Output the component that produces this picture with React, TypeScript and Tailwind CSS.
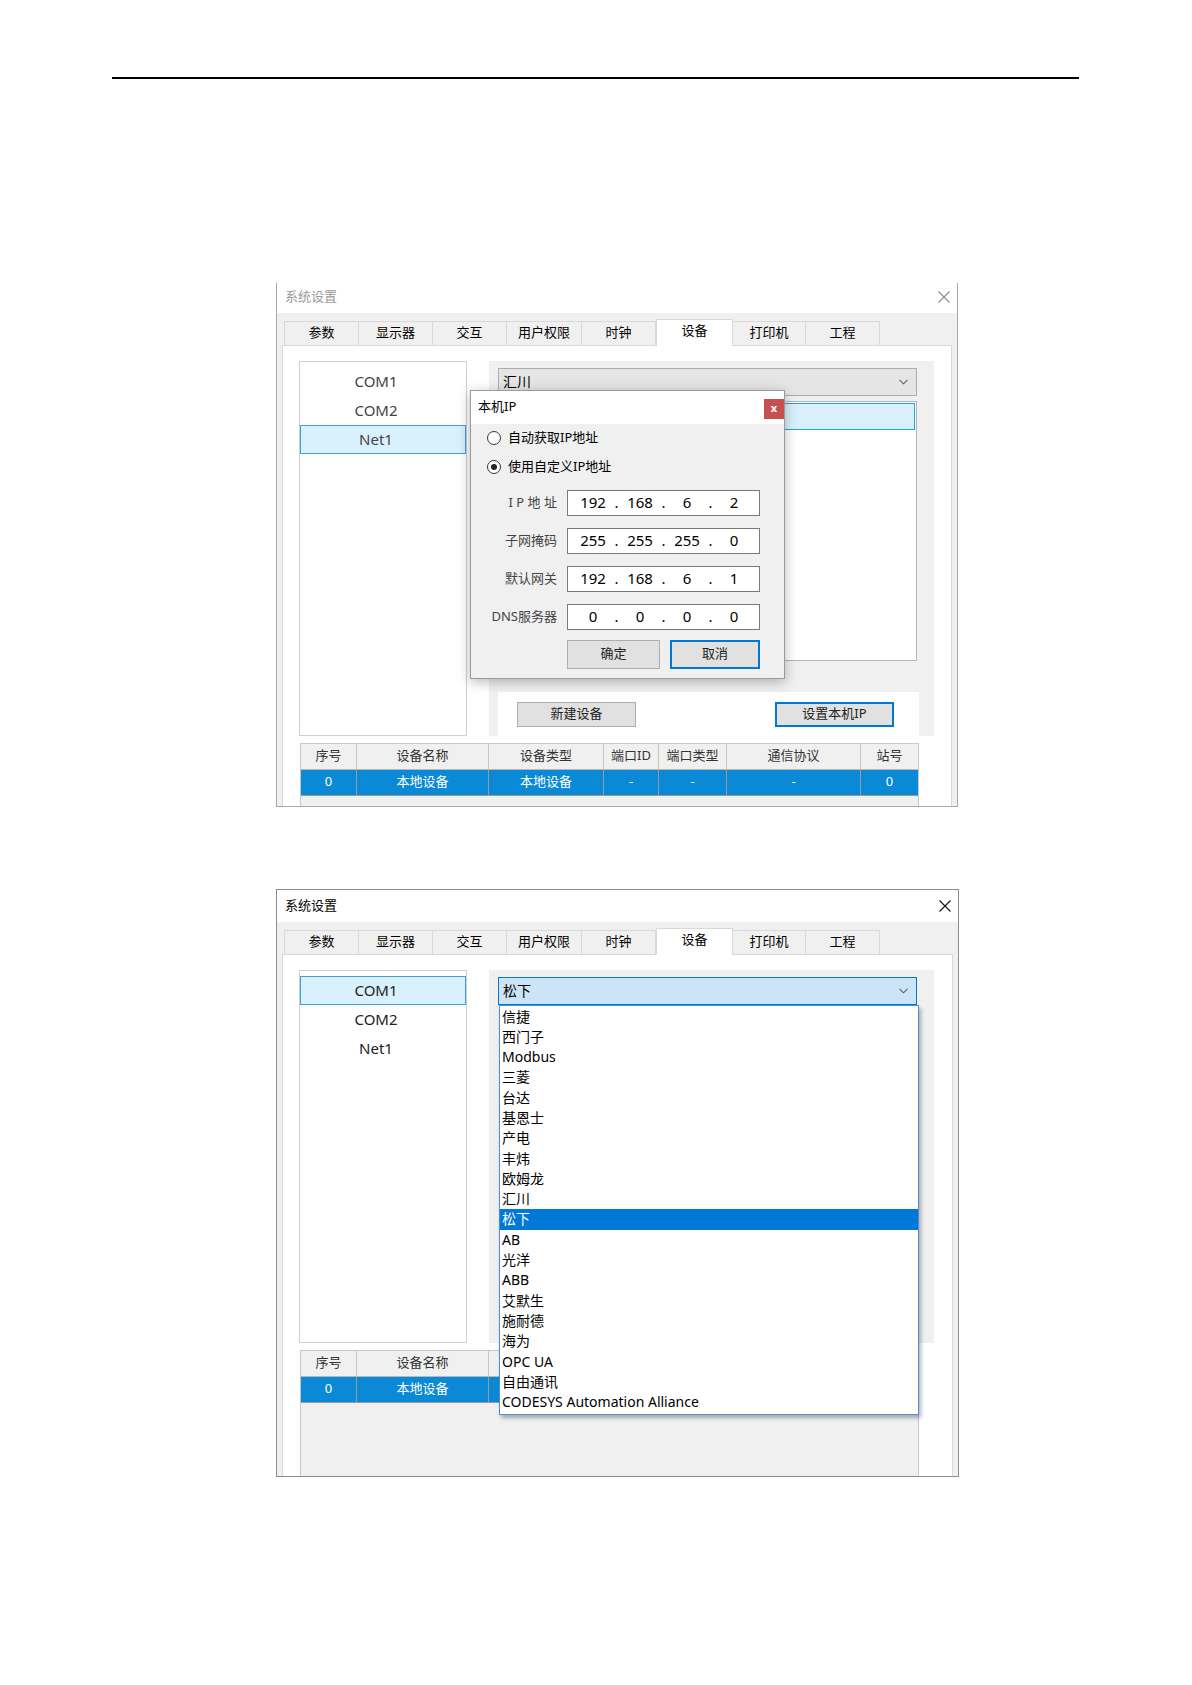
import React from 'react';

const TABS = [
  { label: '参数', w: 'w-[75px]' },
  { label: '显示器', w: 'w-[75px]' },
  { label: '交互', w: 'w-[75px]' },
  { label: '用户权限', w: 'w-[76px]' },
  { label: '时钟', w: 'w-[75px]' },
  { label: '设备', w: 'w-[77px]' },
  { label: '打印机', w: 'w-[74px]' },
  { label: '工程', w: 'w-[75px]' },
];

const PORTS = ['COM1', 'COM2', 'Net1'];

const COLUMNS = [
  { head: '序号', cell: '0', w: 'w-[56px]' },
  { head: '设备名称', cell: '本地设备', w: 'w-[132px]' },
  { head: '设备类型', cell: '本地设备', w: 'w-[115px]' },
  { head: '端口ID', cell: '-', w: 'w-[55px]' },
  { head: '端口类型', cell: '-', w: 'w-[68px]' },
  { head: '通信协议', cell: '-', w: 'w-[134px]' },
  { head: '站号', cell: '0', w: 'w-[57px]' },
];

const VENDORS = [
  '信捷', '西门子', 'Modbus', '三菱', '台达', '基恩士', '产电', '丰炜', '欧姆龙', '汇川',
  '松下', 'AB', '光洋', 'ABB', '艾默生', '施耐德', '海为', 'OPC UA', '自由通讯',
  'CODESYS Automation Alliance',
];

const IP_ROWS = [
  { label: 'I P 地 址', parts: ['192', '168', '6', '2'] },
  { label: '子网掩码', parts: ['255', '255', '255', '0'] },
  { label: '默认网关', parts: ['192', '168', '6', '1'] },
  { label: 'DNS服务器', parts: ['0', '0', '0', '0'] },
];

function CloseIcon({ color }: { color: string }) {
  return (
    <svg width="12" height="12" viewBox="0 0 12 12">
      <path d="M0.5 0.5 L11.5 11.5 M11.5 0.5 L0.5 11.5" stroke={color} strokeWidth="1.1" fill="none" />
    </svg>
  );
}

function Chevron() {
  return (
    <svg width="9" height="6" viewBox="0 0 9 6">
      <path d="M0.5 0.8 L4.5 4.8 L8.5 0.8" stroke="#606060" strokeWidth="1.1" fill="none" />
    </svg>
  );
}

function TabStrip() {
  return (
    <div className="flex items-end h-[26px] pl-[7px]">
      {TABS.map((t) =>
        t.label === '设备' ? (
          <div
            key={t.label}
            className={`${t.w} h-[27px] -mb-px relative z-10 bg-white border-t border-l border-r border-[#d9d9d9] flex items-center justify-center pb-[3px] text-[13px] text-black`}
          >
            {t.label}
          </div>
        ) : (
          <div
            key={t.label}
            className={`${t.w} h-[24px] -ml-px first:ml-0 bg-[#f0f0f0] border-t border-l border-r border-[#d9d9d9] flex items-center justify-center text-[13px] text-black`}
          >
            {t.label}
          </div>
        )
      )}
    </div>
  );
}

function PortList({ selected, height, textColor }: { selected: string; height: string; textColor: string }) {
  return (
    <div className={`w-[168px] ${height} bg-white border border-[#cfcfcf] pt-[5px]`}>
      {PORTS.map((p) => (
        <div
          key={p}
          className={`h-[29px] flex items-center justify-center pr-[14px] text-[15px] ${textColor} ${
            p === selected ? 'bg-[#d9f1fc] border border-[#3f9fe0]' : ''
          }`}
        >
          {p}
        </div>
      ))}
    </div>
  );
}

function Button({ label, focused }: { label: string; focused?: boolean }) {
  return (
    <div
      className={`w-[119px] h-[25px] flex items-center justify-center bg-[#e1e1e1] text-[13px] text-[#222] ${
        focused ? 'border-2 border-[#0078d7]' : 'border border-[#adadad]'
      }`}
    >
      {label}
    </div>
  );
}

function DevicePane({ height, value, open }: { height: string; value: string; open?: boolean }) {
  return (
    <div className={`ml-[22px] w-[445px] ${height} bg-[#f0f0f0] flex flex-col pl-[9px] pt-[7px]`}>
      <div
        className={`w-[419px] h-[28px] flex items-center justify-between pl-[4px] pr-[8px] text-[14px] text-black ${
          open ? 'bg-[#cce4f7] border border-[#0078d7]' : 'bg-[#e5e5e5] border border-[#adadad]'
        }`}
      >
        <span>{value}</span>
        <Chevron />
      </div>
      {/* the open vendor menu covers the list and the buttons below */}
      {!open && (
        <>
          <div className="mt-[5px] w-[419px] h-[260px] bg-white border border-[#b5b5b5] p-px">
            <div className="h-[27px] bg-[#d9f0fb] border border-[#26a0da]" />
          </div>
          <div className="flex-1" />
          <div className="w-[421px] h-[44px] bg-white flex items-start justify-between pt-[10px] pl-[19px] pr-[25px]">
            <Button label="新建设备" />
            <Button label="设置本机IP" focused />
          </div>
        </>
      )}
    </div>
  );
}

function DeviceTable({ shownCols = 7 }: { shownCols?: number }) {
  return (
    <div className="ml-px mt-[7px] w-[619px] flex-1 bg-[#f0f0f0] border-l border-r border-t border-[#c8c8c8] text-[13px]">
      <div className="flex h-[26px] border-b border-[#b8b8b8]">
        {COLUMNS.map((c, i) => (
          <div
            key={c.head}
            className={`${c.w} shrink-0 flex items-center justify-center text-[#333] border-r border-[#c8c8c8] last:border-r-0`}
          >
            {i < shownCols ? c.head : ''}
          </div>
        ))}
      </div>
      <div className="flex h-[26px] bg-[#0a8ad6] border-b border-[#9a9a9a]">
        {COLUMNS.map((c, i) => (
          <div
            key={c.head}
            className={`${c.w} shrink-0 flex items-center justify-center text-white border-r border-[#9a9a9a] last:border-r-0`}
          >
            {i < shownCols ? c.cell : ''}
          </div>
        ))}
      </div>
    </div>
  );
}

function Radio({ checked, label }: { checked?: boolean; label: string }) {
  return (
    <div className="flex items-center pl-[16px]">
      <div className="w-[14px] h-[14px] rounded-full border border-[#333] bg-white flex items-center justify-center">
        {checked && <div className="w-[6px] h-[6px] rounded-full bg-[#222]" />}
      </div>
      <span className="ml-[7px] text-[13px] text-black">{label}</span>
    </div>
  );
}

function IpDialog() {
  return (
    <div className="absolute left-[193px] top-[107px] w-[315px] h-[289px] border border-[#9a9a9a] bg-[#f0f0f0] shadow-[0_3px_12px_rgba(0,0,0,0.28)] flex flex-col">
      <div className="h-[33px] bg-white flex items-start justify-between pl-[7px]">
        <span className="mt-[6px] text-[13px] text-black">本机IP</span>
        <div className="mt-[8px] w-[20px] h-[20px] bg-[#c75050] flex items-center justify-center text-white text-[11px] font-bold leading-none pb-[2px]">
          x
        </div>
      </div>
      <div className="h-[28px] flex items-center">
        <Radio label="自动获取IP地址" />
      </div>
      <div className="h-[30px] flex items-center">
        <Radio checked label="使用自定义IP地址" />
      </div>
      <div className="mt-[8px] flex flex-col gap-[12px]">
        {IP_ROWS.map((r) => (
          <div key={r.label} className="flex items-center h-[26px]">
            <span className="w-[86px] text-right text-[13px] text-[#444] whitespace-pre">{r.label}</span>
            <div className="ml-[10px] w-[193px] h-[26px] bg-white border border-[#7a7a7a] flex items-center pl-[5px] text-[15px] text-black">
              {r.parts.map((p, i) => (
                <React.Fragment key={i}>
                  <span className="w-[40px] text-center">{p}</span>
                  {i < 3 && <span className="w-[7px] text-center">.</span>}
                </React.Fragment>
              ))}
            </div>
          </div>
        ))}
      </div>
      <div className="mt-[10px] ml-[96px] flex gap-[10px]">
        <div className="w-[93px] h-[29px] bg-[#e1e1e1] border border-[#adadad] flex items-center justify-center text-[13px] text-[#222]">
          确定
        </div>
        <div className="w-[90px] h-[29px] bg-[#e1e1e1] border-2 border-[#0078d7] flex items-center justify-center text-[13px] text-[#222]">
          取消
        </div>
      </div>
    </div>
  );
}

function VendorMenu() {
  return (
    <div className="absolute left-[222px] top-[115px] w-[420px] h-[410px] bg-white border border-[#4a90d9] shadow-[2px_3px_4px_rgba(0,0,0,0.3)] pt-px">
      {VENDORS.map((v) => (
        <div
          key={v}
          className={`h-[20.3px] leading-[20.3px] pl-[2px] text-[14px] ${
            v === '松下' ? 'bg-[#0078d7] text-white' : 'text-black'
          }`}
        >
          {v}
        </div>
      ))}
    </div>
  );
}

export default function App() {
  return (
    <div className="w-[1192px] h-[1685px] bg-white overflow-hidden font-['Noto_Sans','Noto_Sans_CJK_SC',sans-serif]">
      <div className="pt-[77px] pl-[112px]">
        <div className="w-[967px] h-[1.5px] bg-black" />
      </div>

      {/* 本机IP 对话框 */}
      <div className="mt-[204px] ml-[276px] w-[682px] h-[524px] relative border-l border-r border-b border-[#a8a8a8] flex flex-col">
        <div className="h-[30px] bg-white flex items-center justify-between pl-[8px] pr-[7px] pb-px">
          <span className="text-[13px] text-[#9a9a9a]">系统设置</span>
          <CloseIcon color="#8a8a8a" />
        </div>
        <div className="flex-1 bg-[#f0f0f0] pt-[6px] flex flex-col">
          <TabStrip />
          <div className="mx-[5px] flex-1 bg-white border-t border-l border-r border-[#d9d9d9] pt-[15px] pl-[16px] flex flex-col">
            <div className="flex">
              <PortList selected="Net1" height="h-[375px]" textColor="text-[#444]" />
              <DevicePane height="h-[375px]" value="汇川" />
            </div>
            <DeviceTable />
          </div>
        </div>
        <IpDialog />
      </div>

      {/* 设备厂家下拉 */}
      <div className="mt-[82px] ml-[276px] w-[683px] h-[588px] relative border border-[#8c8c8c] flex flex-col">
        <div className="h-[32px] bg-white flex items-center justify-between pl-[8px] pr-[7px]">
          <span className="text-[13px] text-black">系统设置</span>
          <CloseIcon color="#111" />
        </div>
        <div className="flex-1 bg-[#f0f0f0] pt-[6px] flex flex-col">
          <TabStrip />
          <div className="mx-[5px] flex-1 bg-white border-t border-l border-r border-[#d9d9d9] pt-[15px] pl-[16px] flex flex-col">
            <div className="flex">
              <PortList selected="COM1" height="h-[373px]" textColor="text-[#222]" />
              <DevicePane height="h-[373px]" value="松下" open />
            </div>
            <DeviceTable shownCols={2} />
          </div>
        </div>
        <VendorMenu />
      </div>
    </div>
  );
}
